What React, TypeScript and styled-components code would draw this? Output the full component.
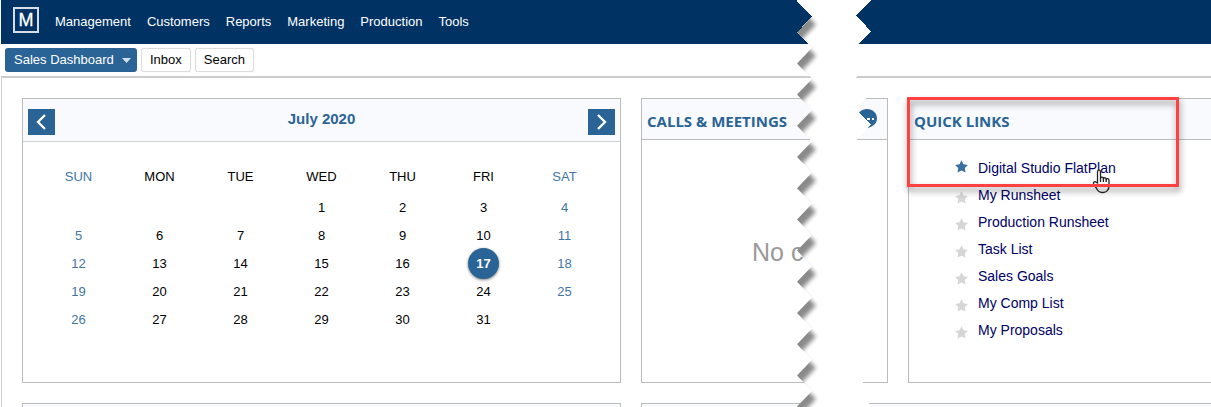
import React from "react";
import styled, { createGlobalStyle, css } from "styled-components";

const navy = "#003263";
const blue = "#2a6496";
const line = "#bcbcbc";

const GlobalStyle = createGlobalStyle`
  * { box-sizing: border-box; }
  body {
    margin: 0;
    background: #fff;
    color: #000;
    font-family: "Liberation Sans", Arial, sans-serif;
    font-size: 13px;
  }
`;

const Page = styled.div`
  position: relative;
  display: flex;
  flex-direction: column;
  min-height: 100vh;
  padding-left: 1px;
  overflow: hidden;
`;

const TopBar = styled.header`
  display: flex;
  align-items: center;
  gap: 16px;
  height: 44px;
  padding: 0 12px 4px;
  background: ${navy};
`;

const Logo = styled.svg`
  display: block;
  width: 26px;
  height: 26px;
`;

const Nav = styled.nav`
  display: flex;
  gap: 16px;
  padding-top: 3px;
`;

const NavLink = styled.a`
  color: #fff;
  line-height: 20px;
  text-decoration: none;
`;

const TabBar = styled.div`
  display: flex;
  align-items: center;
  gap: 4px;
  height: 32px;
  padding: 0 4px;
`;

const control = css`
  height: 24px;
  border-radius: 3px;
  font-family: inherit;
  font-size: 13px;
  line-height: 20px;
`;

const DashboardPicker = styled.div`
  position: relative;
  display: flex;
`;

const DashboardSelect = styled.select`
  ${control}
  appearance: none;
  border: 0;
  padding: 0 23px 0 9px;
  background: ${blue};
  color: #fff;
`;

const Caret = styled.svg`
  position: absolute;
  top: 10px;
  right: 6px;
  width: 9px;
  height: 5px;
  pointer-events: none;
`;

const TabButton = styled.button`
  ${control}
  border: 1px solid #dcdcdc;
  padding: 0 8px;
  background: #fff;
  color: #000;
  box-shadow: 0 0 1px #ddd;
`;

const Board = styled.main`
  display: flex;
  flex: 1;
  flex-direction: column;
  gap: 20px;
  border-top: 2px solid #ccc;
  border-left: 1px solid #ccc;
  padding: 20px 0 0 20px;
`;

const Row = styled.div<{ $fill?: boolean }>`
  display: grid;
  grid-template-columns: 599fr 247fr 303fr;
  gap: 20px;
  flex: ${(p) => (p.$fill ? "1" : "none")};
`;

const Panel = styled.section<{ $bleedRight?: boolean; $bleedBottom?: boolean; $span?: number }>`
  position: relative;
  min-width: 0;
  grid-column: span ${(p) => p.$span ?? 1};
  border: 1px solid ${line};
  ${(p) => p.$bleedRight && "border-right: 0;"}
  ${(p) => p.$bleedBottom && "border-bottom: 0; background: #f9fafd;"}
`;

const PanelHeader = styled.div<{ $tall?: boolean }>`
  display: flex;
  align-items: center;
  justify-content: space-between;
  height: ${(p) => (p.$tall ? 43 : 41)}px;
  padding: ${(p) => (p.$tall ? "4px 5px 0" : "0 10px 0 5px")};
  border-bottom: 1px solid ${(p) => (p.$tall ? "#d0d2d6" : line)};
  background: #f9fafd;
`;

const MonthTitle = styled.h2`
  margin: 0;
  padding-bottom: 6px;
  color: ${blue};
  font-size: 15px;
  line-height: 20px;
`;

const PanelTitle = styled.h2`
  margin: 0;
  padding-top: 3px;
  color: ${blue};
  font: 700 15px/20px "Open Sans", sans-serif;
  white-space: nowrap;
`;

const ArrowButton = styled.button`
  display: flex;
  align-items: center;
  justify-content: center;
  width: 27px;
  height: 26px;
  border: 0;
  padding: 0;
  background: ${blue};
`;

const CalendarBody = styled.div`
  padding: 17px 15px 48px;
`;

const Calendar = styled.table`
  width: 100%;
  table-layout: fixed;
  border-collapse: collapse;
  text-align: center;
`;

const Weekday = styled.th<{ $weekend: boolean }>`
  height: 35px;
  padding: 0;
  font-weight: 400;
  color: ${(p) => (p.$weekend ? "#3f76a5" : "#000")};
`;

const Day = styled.td<{ $weekend: boolean }>`
  height: 28px;
  padding: 0;
  line-height: 28px;
  color: ${(p) => (p.$weekend ? "#3f76a5" : "#000")};
`;

const Today = styled.span`
  display: block;
  width: 31px;
  height: 31px;
  margin: -2px auto -1px;
  border-radius: 50%;
  background: ${blue};
  box-shadow: 0 1px 3px rgba(0, 0, 0, 0.5);
  color: #fff;
  font-weight: 700;
  line-height: 31px;
`;

const EmptyNote = styled.p`
  margin: 0;
  padding: 96px 0 0 110px;
  color: #999;
  font-size: 25px;
  line-height: 32px;
  white-space: nowrap;
`;

const LinkList = styled.ul`
  margin: 0;
  padding: 15px 0 0 46px;
  list-style: none;
`;

const LinkItem = styled.li`
  display: flex;
  gap: 10px;
  height: 27px;
  font-size: 14px;
  line-height: 27px;
`;

const Star = styled.svg<{ $active: boolean }>`
  width: 13px;
  height: 13px;
  margin-top: ${(p) => (p.$active ? 5 : 9)}px;
  fill: ${(p) => (p.$active ? "#3a6f9f" : "#d6d6d6")};
`;

const QuickLink = styled.a`
  color: #000066;
  text-decoration: none;
`;

const Pointer = styled.svg`
  position: absolute;
  top: 70px;
  left: 183px;
  width: 19px;
  height: 25px;
`;

const Highlight = styled.div`
  position: absolute;
  top: -2px;
  left: -2px;
  width: 272px;
  height: 90px;
  border: 3px solid #ff4141;
  filter: drop-shadow(1px 4px 3px rgba(0, 0, 0, 0.45));
  pointer-events: none;
`;

const TearStrip = styled.svg`
  position: absolute;
  top: 0;
  right: 335px;
  width: 80px;
  height: 100%;
  pointer-events: none;
`;

const TOOTH = 31.2;
const TEETH = 80;

// Zigzag running down the strip: near points on even steps, far points on odd ones.
function zigzag(even: number, odd: number, start: number) {
  return Array.from({ length: TEETH }, (_, i) => [i % 2 ? odd : even, start + (i * TOOTH) / 2]);
}

function Tear() {
  const left = zigzag(1, 16, 1);
  const right = zigzag(75, 60, 0);
  const bottom = (TEETH * TOOTH) / 2;
  const join = (points: number[][]) => points.map((p) => p.join(",")).join(" ");
  const gap = `0,-1 ${join(left)} ${join([...right].reverse())}`;
  const sheet = `-60,-20 -14,-14 ${join(left)} -60,${bottom}`;
  return (
    <TearStrip aria-hidden="true">
      <defs>
        <clipPath id="gap">
          <polygon points={gap} />
        </clipPath>
        <filter id="soft" x="-20%" width="140%">
          <feGaussianBlur stdDeviation="2.2" />
        </filter>
      </defs>
      <polygon points={gap} fill="#fff" shapeRendering="crispEdges" />
      <g clipPath="url(#gap)">
        <polygon points={sheet} fill="#000" opacity="0.46" filter="url(#soft)" transform="translate(4 8)" />
      </g>
    </TearStrip>
  );
}

const menu = ["Management", "Customers", "Reports", "Marketing", "Production", "Tools"];
const weekdays = ["SUN", "MON", "TUE", "WED", "THU", "FRI", "SAT"];
const weeks = Array.from({ length: 5 }, (_, w) =>
  Array.from({ length: 7 }, (_, d) => {
    const day = w * 7 + d - 2;
    return day > 0 && day <= 31 ? day : null;
  })
);
const links = [
  "Digital Studio FlatPlan",
  "My Runsheet",
  "Production Runsheet",
  "Task List",
  "Sales Goals",
  "My Comp List",
  "My Proposals",
];
const isWeekend = (i: number) => i === 0 || i === 6;

function Chevron({ d }: { d: string }) {
  return (
    <svg width="12" height="18" viewBox="0 0 12 18" fill="none" stroke="#fff" strokeWidth="2.3">
      <path d={d} />
    </svg>
  );
}

export default function App() {
  return (
    <Page>
      <GlobalStyle />
      <TopBar>
        <Logo viewBox="0 0 26 26" aria-label="M">
          <rect x="1" y="1" width="24" height="24" fill="none" stroke="#d5deea" strokeWidth="2" />
          <text x="13" y="19" textAnchor="middle" fontSize="18" fill="#fff" stroke="#fff" strokeWidth="0.3">
            M
          </text>
        </Logo>
        <Nav>
          {menu.map((m) => (
            <NavLink key={m} href="#">{m}</NavLink>
          ))}
        </Nav>
      </TopBar>
      <TabBar>
        <DashboardPicker>
          <DashboardSelect aria-label="Dashboard">
            <option>Sales Dashboard</option>
          </DashboardSelect>
          <Caret viewBox="0 0 9 5">
            <path d="M0 0h9L4.500 5z" fill="#d3e0ec" />
          </Caret>
        </DashboardPicker>
        <TabButton>Inbox</TabButton>
        <TabButton>Search</TabButton>
      </TabBar>
      <Board>
        <Row>
          <Panel>
            <PanelHeader $tall>
              <ArrowButton aria-label="Previous month">
                <Chevron d="M9 2 2 9l7 7" />
              </ArrowButton>
              <MonthTitle>July 2020</MonthTitle>
              <ArrowButton aria-label="Next month">
                <Chevron d="M2 2l7 7-7 7" />
              </ArrowButton>
            </PanelHeader>
            <CalendarBody>
              <Calendar>
                <thead>
                  <tr>
                    {weekdays.map((d, i) => (
                      <Weekday key={d} $weekend={isWeekend(i)}>{d}</Weekday>
                    ))}
                  </tr>
                </thead>
                <tbody>
                  {weeks.map((week, w) => (
                    <tr key={w}>
                      {week.map((day, i) => (
                        <Day key={i} $weekend={isWeekend(i)}>
                          {day === 17 ? <Today>{day}</Today> : day}
                        </Day>
                      ))}
                    </tr>
                  ))}
                </tbody>
              </Calendar>
            </CalendarBody>
          </Panel>
          <Panel>
            <PanelHeader>
              <PanelTitle>CALLS &amp; MEETINGS</PanelTitle>
              <svg width="20" height="20" viewBox="0 0 20 20">
                <path d="M10 0c5.600 0 10 4 10 9.300 0 5-3.500 8-8 9.200L8 20l-1-2C3 17 0 13.800 0 9.300 0 4 4.400 0 10 0z" fill={blue} />
                <path d="M10 9h3v2h-3zM15 9h2v2h-2z" fill="#fff" />
              </svg>
            </PanelHeader>
            <EmptyNote>No c</EmptyNote>
          </Panel>
          <Panel $bleedRight>
            <PanelHeader>
              <PanelTitle>QUICK LINKS</PanelTitle>
            </PanelHeader>
            <LinkList>
              {links.map((text, i) => (
                <LinkItem key={text}>
                  <Star $active={i === 0} viewBox="0 0 13 13">
                    <path d="M6.500 0.300l2 3.900 4.400.7-3.100 3.200.7 4.500-4-2-4 2 .7-4.500L.1 4.900l4.400-.7z" />
                  </Star>
                  <QuickLink href="#">{text}</QuickLink>
                </LinkItem>
              ))}
            </LinkList>
            <Pointer viewBox="0 0 19 25">
              <path
                d="M5.500 14V3c0-2.600 3-2.600 3 0v6c.5-1.200 2.700-1 2.900.4.700-1 2.600-.8 2.800.6.900-.9 2.800-.4 2.800 1.200v6c0 3.500-2.400 6.300-6 6.300-3 0-4.800-1-6-3.300L1.600 15c-.8-2 1.400-3 2.600-1.700z"
                fill="#fff"
                stroke="#222"
                strokeWidth="1.300"
              />
              <path d="M8.500 9v4M11.400 9.500V13M14.200 10v3" stroke="#222" strokeWidth="1.300" />
            </Pointer>
            <Highlight />
          </Panel>
        </Row>
        <Row $fill>
          <Panel $bleedBottom />
          <Panel $bleedBottom $bleedRight $span={2} />
        </Row>
      </Board>
      <Tear />
    </Page>
  );
}
